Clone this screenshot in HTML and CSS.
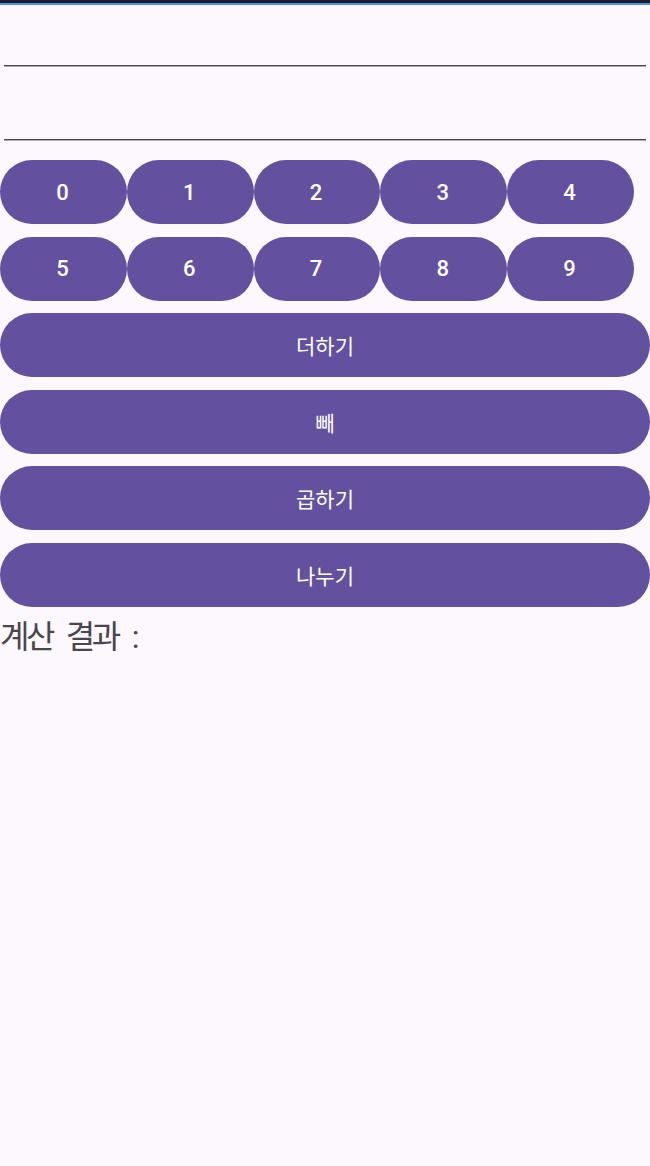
FILE: index.html
```html
<!DOCTYPE html>
<html lang="ko">
<head>
<meta charset="utf-8">
<link rel="stylesheet" href="styles.css">
</head>
<body>
<div class="statusbar"><div class="status-dark"></div><div class="status-blue"></div></div>
<div class="field field-first"></div>
<div class="field field-second"></div>
<div class="keypad">
  <div class="row">
    <button class="btn digit">0</button>
    <button class="btn digit">1</button>
    <button class="btn digit">2</button>
    <button class="btn digit">3</button>
    <button class="btn digit">4</button>
  </div>
  <div class="row">
    <button class="btn digit">5</button>
    <button class="btn digit">6</button>
    <button class="btn digit">7</button>
    <button class="btn digit">8</button>
    <button class="btn digit">9</button>
  </div>
  <button class="btn wide">더하기</button>
  <button class="btn wide">빼</button>
  <button class="btn wide">곱하기</button>
  <button class="btn wide">나누기</button>
</div>
<div class="result">계산 결과 :</div>
</body>
</html>
```
FILE: styles.css
```css
html, body {
  margin: 0;
  padding: 0;
}
body {
  background: #fdf8fd;
  width: 650px;
  height: 1166px;
  overflow: hidden;
  font-family: Roboto, "Noto Sans CJK KR", sans-serif;
}
.statusbar {
  display: flex;
  flex-direction: column;
}
.status-dark {
  height: 3px;
  background: #1c1f26;
}
.status-blue {
  height: 2px;
  background: #4d8ef2;
}
.field {
  margin: 0 4px;
  border-bottom: 1px solid #4a474f;
  box-shadow: 0 1px 0 rgba(74, 71, 79, 0.45);
}
.field-first {
  height: 60px;
}
.field-second {
  height: 73px;
}
.keypad {
  display: flex;
  flex-direction: column;
  gap: 12.5px;
  padding-top: 20px;
}
.row {
  display: flex;
  width: 634px;
}
.btn {
  border: none;
  margin: 0;
  padding: 0;
  height: 64px;
  border-radius: 32px;
  background: #6351a0;
  color: #ffffff;
  font-family: Roboto, "Noto Sans CJK KR", sans-serif;
  font-size: 22px;
}
.digit {
  flex: 1;
  font-weight: 500;
  padding-right: 2px;
}
.wide {
  width: 650px;
  font-weight: 400;
  font-size: 21px;
}
.result {
  margin-top: 11px;
  font-size: 32px;
  line-height: 38px;
  letter-spacing: -3.5px;
  word-spacing: 9.5px;
  color: #4a4650;
  font-family: Roboto, "Noto Sans CJK KR", sans-serif;
}
```
